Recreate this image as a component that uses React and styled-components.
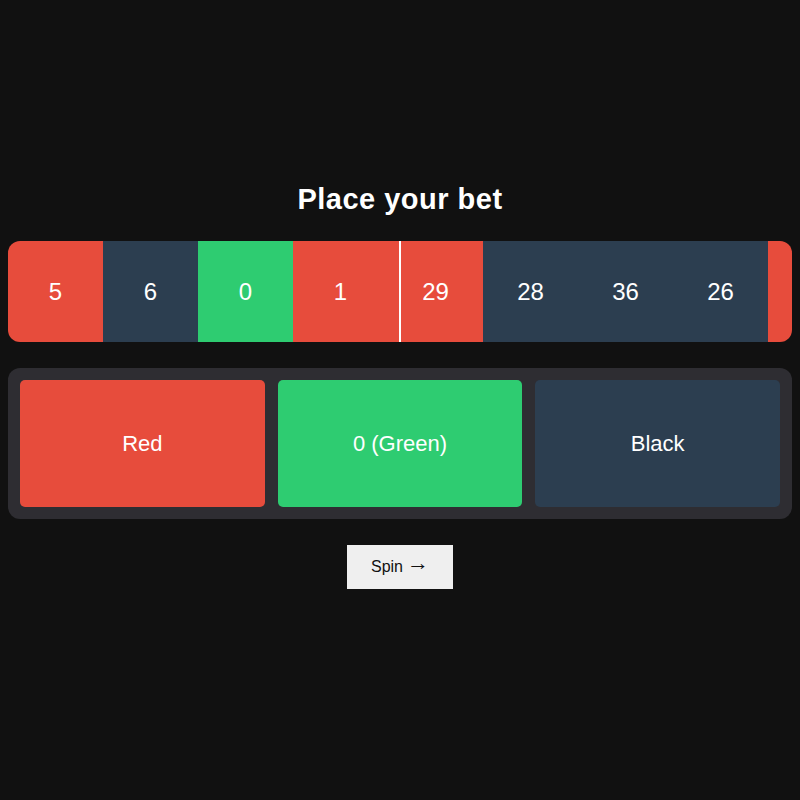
import React from "react";
import styled, { createGlobalStyle } from "styled-components";

const Global = createGlobalStyle`
  html, body { margin: 0; padding: 0; background: #111111; }
  body { font-family: "Liberation Sans", Arial, sans-serif; color: #fff; }
  #root { min-height: 800px; }
`;

const Page = styled.div`
  box-sizing: border-box;
  width: 800px;
  min-height: 800px;
  padding: 183px 8px 0;
  display: flex;
  flex-direction: column;
  align-items: center;
`;

const Title = styled.h1`
  margin: 0 0 26px;
  font-size: 29px;
  line-height: 32px;
  font-weight: 700;
  color: #fff;
  letter-spacing: 0.5px;
`;

const Strip = styled.div`
  position: relative;
  width: 784px;
  height: 101px;
  border-radius: 12px;
  overflow: hidden;
  display: flex;
  margin-bottom: 26px;
`;

const colors = {
  red: "#e74c3c",
  black: "#2c3e50",
  green: "#2ecc71",
};

const Cell = styled.div`
  flex: 0 0 95px;
  height: 100%;
  display: flex;
  align-items: center;
  justify-content: center;
  background: ${(p) => colors[p.$c]};
  font-size: 24px;
  color: #fff;
`;

const Marker = styled.div`
  position: absolute;
  left: 391px;
  top: 0;
  bottom: 0;
  width: 2px;
  background: #fff;
`;

const Panel = styled.div`
  box-sizing: border-box;
  width: 784px;
  padding: 12px;
  border-radius: 12px;
  background: #2e2d32;
  display: grid;
  grid-template-columns: repeat(3, 1fr);
  gap: 13px;
  margin-bottom: 26px;
`;

const BetButton = styled.button`
  height: 127px;
  border: none;
  border-radius: 5px;
  background: ${(p) => colors[p.$c]};
  color: #fff;
  font-family: "Liberation Sans", Arial, sans-serif;
  font-size: 22px;
  cursor: pointer;
`;

const SpinButton = styled.button`
  width: 106px;
  height: 44px;
  border: none;
  border-radius: 0;
  background: #efefef;
  color: #111;
  font-family: "Liberation Sans", Arial, sans-serif;
  font-size: 16px;
  cursor: pointer;
  display: flex;
  align-items: center;
  justify-content: center;
  gap: 4px;
`;

const Arrow = styled.span`
  position: relative;
  top: -4px;
  font-family: "Liberation Sans", Arial, sans-serif;
  font-size: 22px;
  line-height: 1;
`;

const cells = [
  ["5", "red"],
  ["6", "black"],
  ["0", "green"],
  ["1", "red"],
  ["29", "red"],
  ["28", "black"],
  ["36", "black"],
  ["26", "black"],
  ["", "red"],
];

export default function App() {
  return (
    <>
      <Global />
      <Page>
        <Title>Place your bet</Title>
        <Strip>
          {cells.map(([n, c], i) => (
            <Cell key={i} $c={c}>
              {n}
            </Cell>
          ))}
          <Marker />
        </Strip>
        <Panel>
          <BetButton $c="red">Red</BetButton>
          <BetButton $c="green">0 (Green)</BetButton>
          <BetButton $c="black">Black</BetButton>
        </Panel>
        <SpinButton>
          Spin <Arrow>→</Arrow>
        </SpinButton>
      </Page>
    </>
  );
}
